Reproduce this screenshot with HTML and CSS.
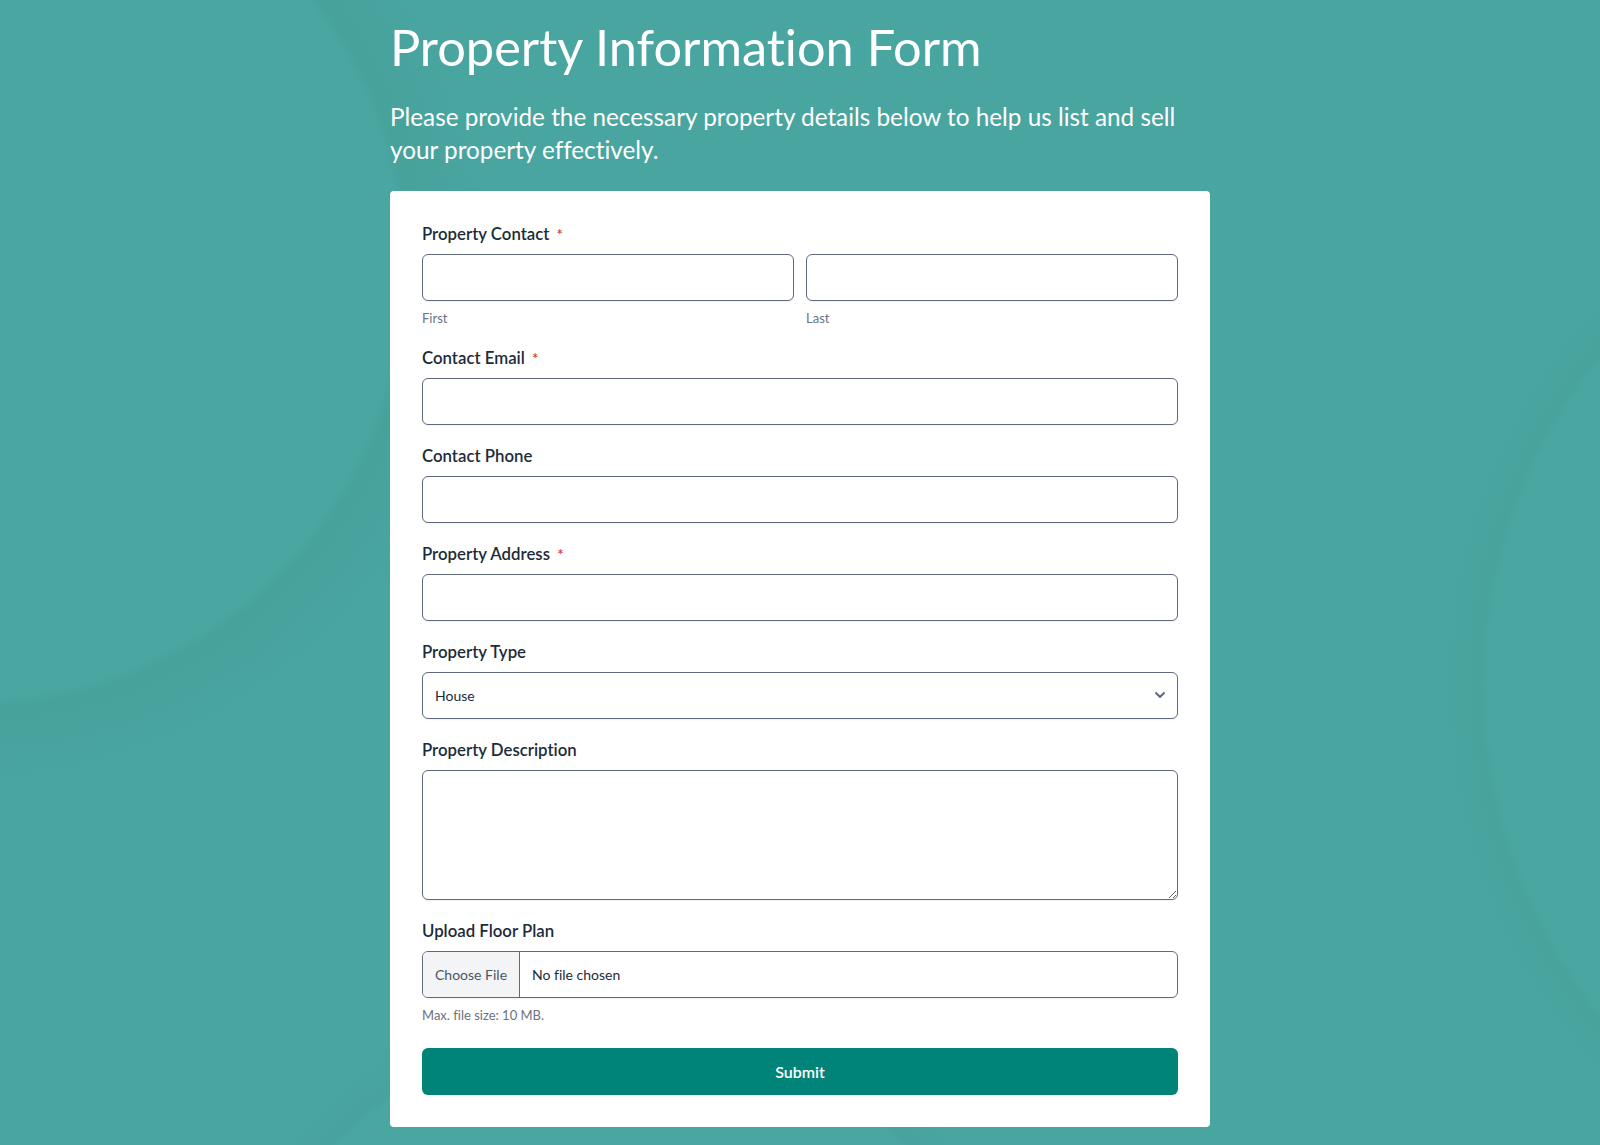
FILE: index.html
```html
<!DOCTYPE html>
<html lang="en">
<head>
<meta charset="utf-8">
<title>Property Information Form</title>
<link rel="stylesheet" href="styles.css">
</head>
<body>
<main class="page">
  <header class="intro">
    <h1 class="title">Property Information Form</h1>
    <p class="subtitle">Please provide the necessary property details below to help us list and sell your property effectively.</p>
  </header>
  <form class="card">
    <div class="field">
      <div class="label">Property Contact <span class="req">*</span></div>
      <div class="name-row">
        <div class="name-col">
          <input class="input" type="text" aria-label="First">
          <div class="sub">First</div>
        </div>
        <div class="name-col">
          <input class="input" type="text" aria-label="Last">
          <div class="sub">Last</div>
        </div>
      </div>
    </div>
    <div class="field">
      <label class="label">Contact Email <span class="req">*</span></label>
      <input class="input" type="email">
    </div>
    <div class="field">
      <label class="label">Contact Phone</label>
      <input class="input" type="tel">
    </div>
    <div class="field">
      <label class="label">Property Address <span class="req">*</span></label>
      <input class="input" type="text">
    </div>
    <div class="field">
      <label class="label">Property Type</label>
      <div class="select-wrap">
        <select class="input select">
          <option>House</option>
          <option>Apartment</option>
          <option>Condo</option>
          <option>Land</option>
        </select>
        <svg class="chevron" width="10" height="6" viewBox="0 0 10 6" aria-hidden="true"><path d="M1 1 L5 5 L9 1" fill="none" stroke="#5b6577" stroke-width="1.8" stroke-linecap="round" stroke-linejoin="round"/></svg>
      </div>
    </div>
    <div class="field">
      <label class="label">Property Description</label>
      <textarea class="input textarea"></textarea>
    </div>
    <div class="field">
      <label class="label">Upload Floor Plan</label>
      <div class="file">
        <span class="file-btn">Choose File</span>
        <span class="file-name">No file chosen</span>
      </div>
      <div class="sub hint">Max. file size: 10 MB.</div>
    </div>
    <button class="submit" type="button">Submit</button>
  </form>
</main>
</body>
</html>
```
FILE: styles.css
```css
* { box-sizing: border-box; }

html, body { margin: 0; padding: 0; }

body {
  min-height: 1145px;
  font-family: Lato, "Open Sans", Arial, sans-serif;
  font-variant-ligatures: none;
  color: #1c2b3a;
  background-color: #49a5a0;
  background-image:
    radial-gradient(circle 440px at -30px 268px, #4aa6a1 0, #4aa6a1 430px, #47a29c 440px, #48a39e 470px, rgba(73,165,160,0) 520px),
    radial-gradient(circle 530px at 2010px 686px, #4aa6a1 0, #4aa6a1 522px, #48a39d 530px, rgba(73,165,160,0) 570px),
    radial-gradient(circle 400px at 620px 1420px, #4aa6a1 0, #4aa6a1 392px, #48a39e 400px, rgba(73,165,160,0) 440px);
  background-repeat: no-repeat;
}

.page {
  width: 820px;
  margin: 0 auto;
  padding-top: 17px;
  padding-bottom: 18px;
}

.intro { color: #ffffff; }

.title {
  margin: 0;
  font-size: 50.5px;
  font-weight: 400;
  line-height: 60px;
}

.subtitle {
  margin: 23px 0 0;
  font-size: 24.3px;
  line-height: 33px;
  font-weight: 400;
}

.card {
  margin-top: 25px;
  background: #ffffff;
  border-radius: 4px;
  padding: 31px 32px 32px;
  display: flex;
  flex-direction: column;
}

.field {
  display: flex;
  flex-direction: column;
  margin-bottom: 19px;
}

.label {
  display: block;
  height: 24px;
  font-size: 16.8px;
  font-weight: 600;
  line-height: 24px;
  margin-bottom: 8px;
  color: #1c2b3a;
}

.req {
  color: #d63a2f;
  font-size: 15px;
  line-height: 1;
  margin-left: 3px;
}

.name-row {
  display: grid;
  grid-template-columns: 1fr 1fr;
  gap: 12px;
}

.name-col {
  display: flex;
  flex-direction: column;
}

.input {
  display: block;
  width: 100%;
  height: 47px;
  margin: 0;
  padding: 0 12px;
  border: 1px solid #5f6a7c;
  border-radius: 6px;
  background: #ffffff;
  font-family: Lato, "Open Sans", Arial, sans-serif;
  font-size: 14px;
  color: #1c2b3a;
  box-shadow: 0 1px 2px rgba(16, 24, 40, 0.06);
  outline: none;
}

.sub {
  margin-top: 8px;
  font-size: 13px;
  line-height: 18px;
  color: #6b7280;
}

.select-wrap { position: relative; }

.select {
  -webkit-appearance: none;
  appearance: none;
  cursor: pointer;
}

.chevron {
  position: absolute;
  right: 13px;
  top: 20px;
  pointer-events: none;
}

.textarea {
  height: 130px;
  padding: 10px 12px;
  resize: vertical;
}

.file {
  display: flex;
  align-items: stretch;
  height: 47px;
  border: 1px solid #5f6a7c;
  border-radius: 6px;
  overflow: hidden;
  box-shadow: 0 1px 2px rgba(16, 24, 40, 0.06);
  font-size: 14px;
}

.file-btn {
  display: flex;
  align-items: center;
  padding: 0 12px;
  background: #f3f4f6;
  border-right: 1px solid #5f6a7c;
  color: #4b5563;
  font-size: 14px;
}

.file-name {
  display: flex;
  align-items: center;
  padding: 0 12px;
  color: #1c2b3a;
}

.hint { margin-top: 8px; }

.submit {
  margin-top: 5px;
  height: 47px;
  width: 100%;
  border: 0;
  border-radius: 6px;
  background: #00847a;
  color: #ffffff;
  font-family: Lato, "Open Sans", Arial, sans-serif;
  font-size: 16px;
  font-weight: 600;
  cursor: pointer;
  box-shadow: 0 1px 2px rgba(16, 24, 40, 0.06);
}
```
